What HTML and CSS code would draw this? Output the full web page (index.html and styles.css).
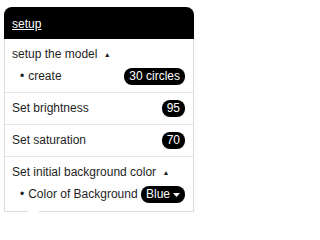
FILE: index.html
```html
<!DOCTYPE html>
<html>
<head>
<meta charset="utf-8">
<link rel="stylesheet" href="styles.css">
</head>
<body>
<div class="card">
  <div class="header"><span class="title">setup</span></div>
  <div class="section">
    <div class="row"><span>setup the model <span class="tri">▲</span></span></div>
    <div class="row sub"><span><span class="dot">•</span>create</span><span class="pill">30 circles</span></div>
  </div>
  <div class="section">
    <div class="row"><span>Set brightness</span><span class="pill">95</span></div>
  </div>
  <div class="section">
    <div class="row"><span>Set saturation</span><span class="pill">70</span></div>
  </div>
  <div class="section last">
    <div class="row"><span>Set initial background color <span class="tri">▲</span></span></div>
    <div class="row sub"><span><span class="dot">•</span>Color of Background</span><span class="pill select">Blue<svg class="caret" width="7" height="4" viewBox="0 0 7 4"><path d="M0 0H7L3.5 4Z" fill="#fff"/></svg></span></div>
  </div>
</div>
</body>
</html>
```
FILE: styles.css
```css
html, body {
  margin: 0;
  padding: 0;
  background: #ffffff;
}
body {
  font-family: "Liberation Sans", Arial, sans-serif;
  font-size: 12px;
  color: #1e1e1e;
}
.card {
  position: relative;
  margin: 7px 0 0 4px;
  width: 190px;
  box-sizing: border-box;
  border: 1px solid #dcdcdc;
  border-top: none;
  border-radius: 8px 8px 0 0;
  background: #fff;
}
.card::after {
  content: "";
  position: absolute;
  left: 24px;
  bottom: -6px;
  width: 8px;
  height: 8px;
  background: #fff;
  border-right: 1px solid #dcdcdc;
  border-bottom: 1px solid #dcdcdc;
  transform: rotate(45deg);
}
.header {
  background: #000;
  border-radius: 8px 8px 0 0;
  height: 32px;
  margin: 0 -1px;
  display: flex;
  align-items: center;
  padding: 2px 0 0 8px;
  box-sizing: border-box;
}
.title {
  color: #fff;
  text-decoration: underline;
  font-size: 12px;
}
.section {
  display: flex;
  flex-direction: column;
  gap: 5px;
  padding: 7px 8px 7px 7px;
  border-bottom: 1px solid #e6e6e6;
}
.section.last {
  border-bottom: none;
  padding-bottom: 8px;
}
.row {
  height: 17px;
  display: flex;
  align-items: center;
  justify-content: space-between;
  line-height: 15px;
}
.row.sub {
  padding-left: 8px;
}
.dot {
  margin-right: 4px;
}
.tri {
  font-size: 7px;
  margin-left: 3px;
  vertical-align: 1px;
}
.pill {
  background: #000;
  color: #fff;
  border-radius: 8px;
  height: 17px;
  line-height: 17px;
  padding: 0 5px;
  display: inline-flex;
  align-items: center;
}
.pill.select {
  gap: 3px;
}
.caret {
  display: block;
}
```
